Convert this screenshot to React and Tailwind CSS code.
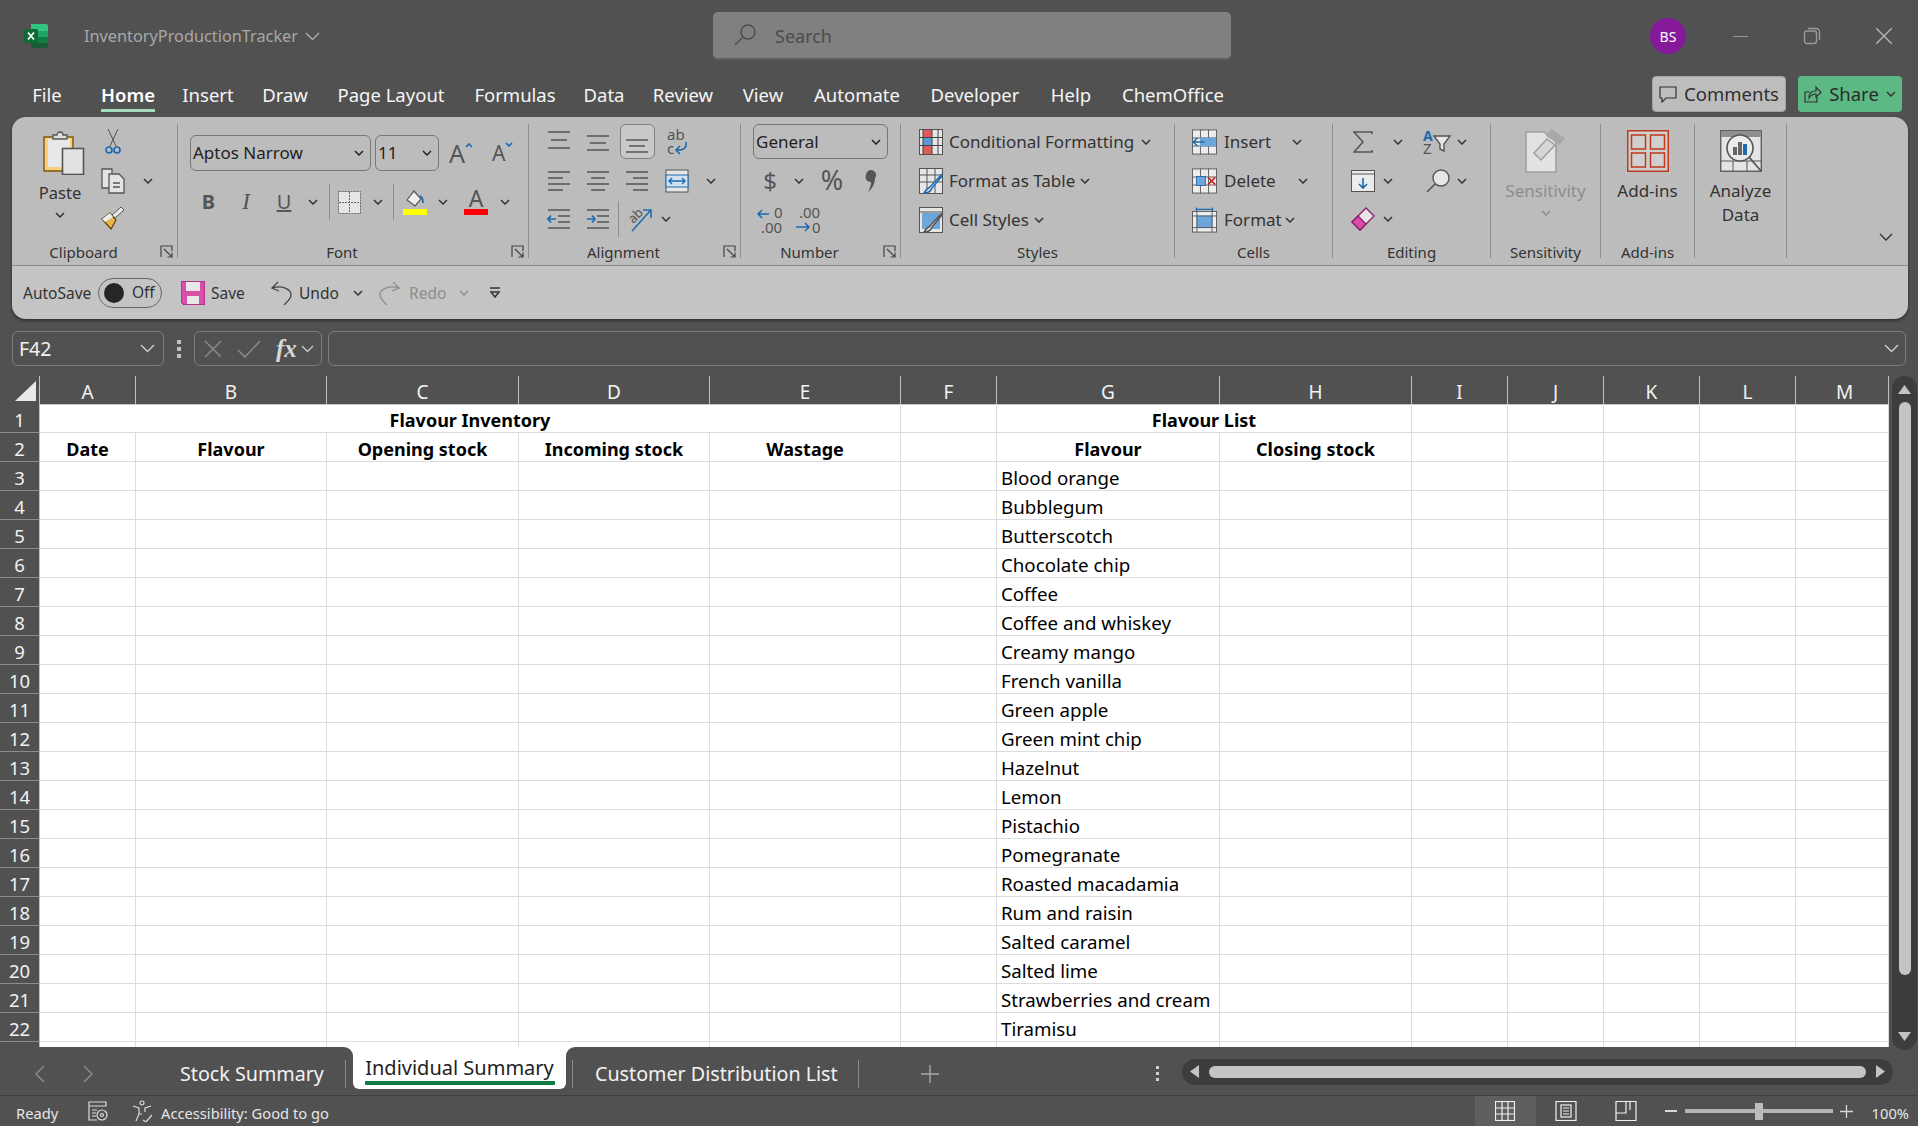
import React from 'react';

const Chev = ({ c = '#333' }) => (
  <svg width="10" height="6" viewBox="0 0 10 6"><path d="M1 1l4 4 4-4" fill="none" stroke={c} strokeWidth="1.5" /></svg>
);
const Launcher = () => (
  <svg width="13" height="13" viewBox="0 0 13 13" fill="none" stroke="#444" strokeWidth="1.2"><path d="M1 12V1h11v5M4 4l8 8M7.5 12H12V7.5" /></svg>
);
const Sep = () => <div className="w-px h-[134px] mt-[2px] bg-[#8e8e8e] shrink-0" />;
const Cell = ({ className = '', children }) => <div className={`flex items-center justify-center shrink-0 ${className}`}>{children}</div>;
const Row = ({ className = '', children }) => <div className={`flex items-center h-[39px] ${className}`}>{children}</div>;

const Group = ({ w, label, launcher, children }) => (
  <div className={`flex flex-col h-[144px] shrink-0 ${w}`}>
    <div className="h-[117px]">{children}</div>
    <div className="h-[25px] flex items-center text-[15px] text-[#333]">
      <div className="flex-1 text-center leading-[22px]">{label}</div>
      {launcher && <div className="w-[22px] flex justify-center"><Launcher /></div>}
    </div>
  </div>
);

const Lines = ({ ys, xs }) => (
  <svg width="24" height="24" viewBox="0 0 24 24" stroke="#555" strokeWidth="1.6">
    {ys.map((y, i) => <line key={i} x1={xs[i][0]} x2={xs[i][1]} y1={y} y2={y} />)}
  </svg>
);
const GridIcon = ({ children }) => (
  <svg width="28" height="28" viewBox="0 0 28 28">
    <rect x="0.5" y="0.5" width="27" height="27" fill="#ececec" stroke="#555" />
    <path d="M0 9.5h28M0 18.5h28M9.5 0v28M18.5 0v28" stroke="#555" />
    {children}
  </svg>
);

const tabs = [['File', 'w-[60px]'], ['Home', 'w-[102px]'], ['Insert', 'w-[58px]'], ['Draw', 'w-[96px]'], ['Page Layout', 'w-[116px]'], ['Formulas', 'w-[132px]'], ['Data', 'w-[46px]'], ['Review', 'w-[112px]'], ['View', 'w-[48px]'], ['Automate', 'w-[140px]'], ['Developer', 'w-[96px]'], ['Help', 'w-[96px]'], ['ChemOffice', 'w-[108px]']];

const colW = [['A', 'w-[96px]'], ['B', 'w-[191px]'], ['C', 'w-[192px]'], ['D', 'w-[191px]'], ['E', 'w-[191px]'], ['F', 'w-[96px]'], ['G', 'w-[223px]'], ['H', 'w-[192px]'], ['I', 'w-[96px]'], ['J', 'w-[96px]'], ['K', 'w-[96px]'], ['L', 'w-[96px]'], ['M', 'w-[93px]']];

const flavours = ['Blood orange', 'Bubblegum', 'Butterscotch', 'Chocolate chip', 'Coffee', 'Coffee and whiskey', 'Creamy mango', 'French vanilla', 'Green apple', 'Green mint chip', 'Hazelnut', 'Lemon', 'Pistachio', 'Pomegranate', 'Roasted macadamia', 'Rum and raisin', 'Salted caramel', 'Salted lime', 'Strawberries and cream', 'Tiramisu', ''];

const gc = 'h-[29px] shrink-0 border-r border-b border-[#dcdcdc] flex items-center overflow-hidden whitespace-nowrap pt-[3px]';

const RowHead = ({ n }) => (
  <div className="w-[40px] h-[29px] pt-[3px] shrink-0 bg-[#515151] border-b border-[#8c8c8c] border-r border-r-[#c0c0c0] text-[#f2f2f2] text-[18.5px] flex items-center justify-center">{n}</div>
);

const SheetRow = ({ n, i }) => {
  const heads = ['Date', 'Flavour', 'Opening stock', 'Incoming stock', 'Wastage', '', 'Flavour', 'Closing stock'];
  return (
    <div className="flex">
      <RowHead n={n} />
      {colW.map(([c, w], k) => (
        <div key={c} className={`${gc} ${w} ${n === 2 ? 'justify-center font-bold' : 'pl-[4px] text-[18.7px]'}`}>
          {n === 2 ? heads[k] : c === 'G' ? flavours[i] : ''}
        </div>
      ))}
    </div>
  );
};

export default function App() {
  return (
    <div className="w-[1918px] h-[1126px] overflow-hidden bg-[#515151] font-['Noto_Sans',sans-serif] text-black">
      {/* Title bar */}
      <div className="h-[72px] flex items-start">
        <div className="w-[713px] h-[72px] flex items-center pl-[24px] shrink-0">
          <svg width="24" height="24" viewBox="0 0 24 24">
            <path d="M7 0h15a2 2 0 0 1 2 2v5H7z" fill="#33c481" />
            <rect x="7" y="7" width="17" height="6" fill="#21a366" />
            <rect x="7" y="13" width="17" height="6" fill="#107c41" />
            <path d="M7 19h17v3a2 2 0 0 1-2 2H9a2 2 0 0 1-2-2z" fill="#185c37" />
            <rect x="0" y="5" width="14" height="14" rx="1.5" fill="#0e6b38" />
            <path d="M4 8.5l6 7M10 8.5l-6 7" stroke="#fff" strokeWidth="1.7" />
          </svg>
          <span className="ml-[36px] text-[16.3px] text-[#a8a8a8] leading-[24px]">InventoryProductionTracker</span>
          <span className="ml-[7px]"><svg width="15" height="9" viewBox="0 0 15 9"><path d="M1 1l6.5 6.5L14 1" fill="none" stroke="#a8a8a8" strokeWidth="1.5" /></svg></span>
        </div>
        <div className="w-[518px] h-[48px] mt-[12px] rounded-[5px] bg-[#808080] border-b-2 border-[#5f5f5f] flex items-center shrink-0">
          <span className="ml-[20px]">
            <svg width="24" height="24" viewBox="0 0 24 24" fill="none" stroke="#4e4e4e" strokeWidth="1.5"><circle cx="15" cy="9" r="7" /><path d="M10 14l-8 8" /></svg>
          </span>
          <span className="ml-[18px] pt-[2px] text-[18px] text-[#4c4c4c]">Search</span>
        </div>
        <div className="ml-[419px] mt-[18px] w-[36px] h-[36px] rounded-full bg-[#86189a] text-white text-[14px] flex items-center justify-center shrink-0">BS</div>
        <div className="ml-[30px] mt-[27px] w-[48px] h-[18px] flex items-center justify-center shrink-0">
          <div className="w-[15px] h-px bg-[#9a9a9a]" />
        </div>
        <div className="ml-[39px] mt-[27px] shrink-0">
          <svg width="18" height="18" viewBox="0 0 18 18" fill="none" stroke="#9a9a9a" strokeWidth="1.4"><rect x="1.5" y="4" width="12" height="12.5" rx="2.5" /><path d="M5 1.5h8a3.5 3.5 0 0 1 3.5 3.5v8" /></svg>
        </div>
        <div className="ml-[55px] mt-[28px] shrink-0">
          <svg width="16" height="16" viewBox="0 0 16 16" fill="none" stroke="#b5b5b5" strokeWidth="1.4"><path d="M0 0l16 16M16 0L0 16" /></svg>
        </div>
      </div>

      {/* Ribbon tabs */}
      <div className="h-[45px] flex pl-[17px] text-[18.5px] text-[#f5f5f5]">
        {tabs.map(([t, w]) => (
          <div key={t} className={`${w} shrink-0 pt-[11px] text-center leading-[24px] whitespace-nowrap flex justify-center`}>
            {t === 'Home'
              ? <span className="inline-block font-semibold text-white h-[29px] border-b-[3px] border-[#a5dcc0]">{t}</span>
              : <span>{t}</span>}
          </div>
        ))}
        <div className="flex-1" />
        <div className="w-[134px] h-[36px] mt-[4px] rounded-[4px] bg-[#bdbdbd] border border-[#a3a3a3] flex items-center justify-center gap-[7px] text-[#2f2f2f] shrink-0">
          <svg width="18" height="17" viewBox="0 0 18 17" fill="none" stroke="#333" strokeWidth="1.2"><path d="M1 1h16v11H7l-4 4v-4H1z" /></svg>
          <span>Comments</span>
        </div>
        <div className="w-[104px] h-[36px] mt-[4px] ml-[12px] mr-[16px] rounded-[4px] bg-[#5cb984] flex items-center justify-center gap-[7px] text-[#2b2b2b] shrink-0">
          <svg width="18" height="18" viewBox="0 0 18 18" fill="none" stroke="#333" strokeWidth="1.2"><path d="M1 7h5M1 7v10h12v-5M5 13c0-5 3-7 7-7V2l5 5.5L12 12V9c-3 0-5 1-7 4z" /></svg>
          <span>Share</span>
          <Chev />
        </div>
      </div>

      {/* Ribbon */}
      <div className="ml-[12px] w-[1896px] h-[202px] rounded-[14px] overflow-hidden shadow-[0_2px_3px_rgba(0,0,0,0.4)]">
        <div className="h-[149px] bg-[#bcbcbc] border-b border-[#8a8a8a] flex pt-[5px] text-[#333] text-[17px]">
          <Group w="w-[165px]" label="Clipboard" launcher>
            <div className="flex">
              <div className="ml-[18px] w-[60px] flex flex-col items-center">
                <svg className="mt-[8px] ml-[8px]" width="42" height="45" viewBox="0 0 42 45">
                  <path d="M1 7h29v34H1z" fill="#f8d078" stroke="#7a5510" strokeWidth="1.4" />
                  <path d="M5 9h22v28H5z" fill="#e8e8e8" />
                  <path d="M10 9V5h4a3 3 0 0 1 6 0h4v4z" fill="#ddd" stroke="#555" strokeWidth="1.3" />
                  <rect x="19.5" y="18.5" width="21" height="26" fill="#e2e2e2" stroke="#555" strokeWidth="1.6" />
                </svg>
                <span className="mt-[6px] leading-[24px] text-[16.5px]">Paste</span>
                <span className="mt-[7px]"><Chev /></span>
              </div>
              <div className="w-[70px]">
                <Row>
                  <Cell className="w-[46px]">
                    <svg width="16" height="26" viewBox="0 0 16 26" fill="none"><path d="M3 0l8 17M13 0L5 17" stroke="#555" /><circle cx="4" cy="21" r="3" stroke="#1d69b0" strokeWidth="1.7" /><circle cx="12" cy="21" r="3" stroke="#1d69b0" strokeWidth="1.7" /></svg>
                  </Cell>
                </Row>
                <Row>
                  <Cell className="w-[46px]">
                    <svg width="24" height="26" viewBox="0 0 24 26" fill="none" stroke="#555" strokeWidth="1.3"><path d="M9 20H1V1h10v4" fill="#e4e4e4" /><path d="M8 6h10l5 5v14H8z" fill="#e4e4e4" /><path d="M12 15h7M12 19h7" /></svg>
                  </Cell>
                  <Cell className="w-[24px]"><Chev /></Cell>
                </Row>
                <Row className="-mt-[2px]">
                  <Cell className="w-[46px]">
                    <svg width="24" height="24" viewBox="0 0 24 24"><path d="M1 13l8-6 6 7-5 9z" fill="#e8b64c" stroke="#5a4210" strokeWidth="1.2" /><path d="M1 13l8-6 3 4-8 5z" fill="#eee" /><path d="M11 9l9-8 3 3-9 8z" fill="#e6e6e6" stroke="#555" /></svg>
                  </Cell>
                </Row>
              </div>
            </div>
          </Group>
          <Sep />
          <Group w="w-[350px]" label="Font" launcher>
            <div className="h-[62px] flex items-center pl-[12px]">
              <div className="w-[181px] h-[36px] rounded-[6px] border border-[#777] flex items-center pl-[2px] pr-[6px] justify-between text-[17px] text-[#222]"><span>Aptos Narrow</span><Chev c="#222" /></div>
              <div className="ml-[4px] w-[64px] h-[36px] rounded-[6px] border border-[#777] flex items-center pl-[2px] pr-[6px] justify-between text-[17px] text-[#222]"><span>11</span><Chev c="#222" /></div>
              <div className="ml-[10px] w-[24px] flex items-start text-[25px] leading-[30px] text-[#555]"><span>A</span><svg className="mt-[4px] shrink-0" width="8" height="6" viewBox="0 0 8 6"><path d="M1 5l3-3 3 3" fill="none" stroke="#1d69b0" strokeWidth="1.6" /></svg></div>
              <div className="ml-[19px] w-[22px] flex items-start text-[21px] leading-[30px] text-[#555]"><span>A</span><svg className="mt-[4px] shrink-0" width="8" height="6" viewBox="0 0 8 6"><path d="M1 1l3 3 3-3" fill="none" stroke="#1d69b0" strokeWidth="1.6" /></svg></div>
            </div>
            <div className="h-[36px] flex items-center pl-[12px] text-[#555]">
              <Cell className="w-[37px] font-bold text-[20px]">B</Cell>
              <Cell className="w-[38px] italic text-[23px] font-['Liberation_Serif',serif]">I</Cell>
              <Cell className="w-[38px]"><span className="text-[20px] underline leading-[24px]">U</span></Cell>
              <Cell className="w-[20px]"><Chev /></Cell>
              <div className="ml-[6px] w-px h-[36px] bg-[#8e8e8e]" />
              <Cell className="w-[38px]">
                <svg width="23" height="23" viewBox="0 0 23 23"><rect x="0.5" y="0.5" width="22" height="22" fill="#e6e6e6" stroke="#666" strokeDasharray="2 1" /><path d="M11.5 1v21M1 11.5h21" stroke="#666" strokeDasharray="2 1" /></svg>
              </Cell>
              <Cell className="w-[20px]"><Chev /></Cell>
              <div className="ml-[5px] w-px h-[36px] bg-[#8e8e8e]" />
              <Cell className="w-[42px]">
                <svg width="24" height="25" viewBox="0 0 24 25"><path d="M4 10L11 1l7 8-6 7z" fill="#eee" stroke="#555" strokeWidth="1.2" /><path d="M17 6c3 1 3 5 3 7" stroke="#1d69b0" strokeWidth="1.8" fill="none" /><rect x="0" y="19" width="24" height="6" fill="#ffff00" /></svg>
              </Cell>
              <Cell className="w-[14px]"><Chev /></Cell>
              <Cell className="ml-[4px] w-[44px]">
                <div className="flex flex-col items-center w-[24px]">
                  <span className="text-[23px] leading-[19px] text-[#555]">A</span>
                  <div className="w-[24px] h-[6px] mt-[1px] bg-[#ff0000]" />
                </div>
              </Cell>
              <Cell className="w-[13px]"><Chev /></Cell>
            </div>
          </Group>
          <Sep />
          <Group w="w-[211px]" label="Alignment" launcher>
            <Row className="pl-[11px]">
              <Cell className="w-[38px]"><Lines ys={[2, 10, 18]} xs={[[1, 23], [4, 20], [1, 23]]} /></Cell>
              <Cell className="w-[40px]"><Lines ys={[6, 13, 20]} xs={[[1, 23], [4, 20], [1, 23]]} /></Cell>
              <Cell className="w-[38px]"><div className="w-[35px] h-[35px] rounded-[6px] border border-[#808080] bg-[#c9c9c9] flex items-center justify-center"><Lines ys={[10, 16, 22]} xs={[[1, 23], [4, 20], [1, 23]]} /></div></Cell>
              <Cell className="w-[42px]">
                <svg className="overflow-visible" width="24" height="28" viewBox="0 0 24 28"><text x="2" y="12" fontSize="15" fill="#555" fontFamily="Noto Sans">ab</text><text x="2" y="26" fontSize="15" fill="#555" fontFamily="Noto Sans">c</text><path d="M21 14c1 7-3 8-9 8M15 18l-4 4 4 4" fill="none" stroke="#1d69b0" strokeWidth="1.6" /></svg>
              </Cell>
            </Row>
            <Row className="pl-[11px]">
              <Cell className="w-[38px]"><Lines ys={[3, 9, 15, 21]} xs={[[1, 23], [1, 16], [1, 23], [1, 16]]} /></Cell>
              <Cell className="w-[40px]"><Lines ys={[3, 9, 15, 21]} xs={[[1, 23], [5, 19], [1, 23], [5, 19]]} /></Cell>
              <Cell className="w-[38px]"><Lines ys={[3, 9, 15, 21]} xs={[[1, 23], [8, 23], [1, 23], [8, 23]]} /></Cell>
              <Cell className="w-[42px]">
                <svg width="24" height="24" viewBox="0 0 24 24" fill="none"><rect x="1" y="1" width="22" height="22" fill="#e6e6e6" stroke="#555" /><rect x="1" y="6" width="22" height="12" fill="#cfe0ef" stroke="#1d69b0" /><path d="M4 12h16M7 9l-3 3 3 3M17 9l3 3-3 3" stroke="#1d69b0" strokeWidth="1.4" /></svg>
              </Cell>
              <Cell className="w-[26px]"><Chev /></Cell>
            </Row>
            <Row className="pl-[11px] -mt-px">
              <Cell className="w-[38px]">
                <svg width="24" height="24" viewBox="0 0 24 24" fill="none"><path d="M1 3h22M11 9h12M11 15h12M1 21h22" stroke="#555" strokeWidth="1.6" /><path d="M9 12H1M4 8.5L1 12l3 3.5" stroke="#1d69b0" strokeWidth="1.7" /></svg>
              </Cell>
              <Cell className="w-[40px]">
                <svg width="24" height="24" viewBox="0 0 24 24" fill="none"><path d="M1 3h22M11 9h12M11 15h12M1 21h22" stroke="#555" strokeWidth="1.6" /><path d="M1 12h8M6 8.5L9 12l-3 3.5" stroke="#1d69b0" strokeWidth="1.7" /></svg>
              </Cell>
              <div className="w-px h-[36px] bg-[#8e8e8e] mr-[2px]" />
              <Cell className="w-[40px]">
                <svg className="overflow-visible" width="26" height="26" viewBox="0 0 26 26" fill="none"><text x="1" y="14" fontSize="13" fill="#555" fontFamily="Noto Sans" transform="rotate(-45 8 11)">ab</text><path d="M4 25L22 5M15 4h8v8" stroke="#1d69b0" strokeWidth="1.5" /></svg>
              </Cell>
              <Cell className="w-[10px]"><Chev /></Cell>
            </Row>
          </Group>
          <Sep />
          <Group w="w-[159px]" label="Number" launcher>
            <Row className="pl-[12px]">
              <div className="w-[135px] h-[35px] rounded-[6px] border border-[#777] flex items-center pl-[2px] pr-[6px] justify-between text-[17px] text-[#222]"><span>General</span><Chev c="#222" /></div>
            </Row>
            <Row className="pl-[14px] text-[#555]">
              <Cell className="w-[30px] text-[24px]">$</Cell>
              <Cell className="w-[28px]"><Chev /></Cell>
              <Cell className="w-[38px] text-[27px]">%</Cell>
              <Cell className="w-[40px]">
                <svg width="12" height="24" viewBox="0 0 12 24"><path d="M1 6a5 5 0 1 1 9 3c0 6-3 11-7 14 2-4 3-7 3-10a5 5 0 0 1-5-7z" fill="#555" /></svg>
              </Cell>
            </Row>
            <Row className="pl-[11px]">
              <Cell className="w-[38px]">
                <svg className="overflow-visible" width="30" height="28" viewBox="0 0 30 28" fill="none"><text x="18" y="12" fontSize="15" fill="#555" fontFamily="Noto Sans">0</text><text x="5" y="27" fontSize="15" fill="#555" fontFamily="Noto Sans">.00</text><path d="M13 8H2M6 4L2 8l4 4" stroke="#1d69b0" strokeWidth="1.5" /></svg>
              </Cell>
              <Cell className="w-[38px]">
                <svg className="overflow-visible" width="30" height="28" viewBox="0 0 30 28" fill="none"><text x="5" y="12" fontSize="15" fill="#555" fontFamily="Noto Sans">.00</text><text x="18" y="27" fontSize="15" fill="#555" fontFamily="Noto Sans">0</text><path d="M2 21h13M11 17l4 4-4 4" stroke="#1d69b0" strokeWidth="1.5" /></svg>
              </Cell>
            </Row>
          </Group>
          <Sep />
          <Group w="w-[273px]" label="Styles">
            <Row className="pl-[18px]">
              <svg width="24" height="26" viewBox="0 0 24 26"><rect x="0.5" y="0.5" width="23" height="25" fill="#e6e6e6" stroke="#555" /><rect x="4" y="1" width="9" height="7" fill="#e05a5a" /><rect x="4" y="9" width="9" height="7" fill="#5b9bd5" /><rect x="4" y="17" width="9" height="8" fill="#e05a5a" /><path d="M0 8.5h24M0 16.5h24M4 0v26M13 0v26M19 0v26" stroke="#444" /></svg>
              <span className="ml-[6px] text-[#333] whitespace-nowrap">Conditional Formatting</span>
              <span className="ml-[7px]"><Chev /></span>
            </Row>
            <Row className="pl-[18px]">
              <svg width="24" height="26" viewBox="0 0 24 26" fill="none"><rect x="0.5" y="0.5" width="23" height="25" fill="#e6e6e6" stroke="#555" /><path d="M0 7h24M0 14h24M8 0v26M16 0v26" stroke="#555" /><path d="M23 6l-12 13c-2 1-4 3-6 6 4 0 7-2 8-5L23 8" fill="#e6e6e6" stroke="#1d69b0" strokeWidth="1.5" /></svg>
              <span className="ml-[6px] text-[#333] whitespace-nowrap">Format as Table</span>
              <span className="ml-[5px]"><Chev /></span>
            </Row>
            <Row className="pl-[18px]">
              <svg width="24" height="26" viewBox="0 0 24 26" fill="none"><rect x="0.5" y="0.5" width="23" height="25" fill="#e6e6e6" stroke="#555" /><rect x="3" y="6" width="18" height="16" fill="#6ea6da" /><path d="M0 5h24" stroke="#555" /><path d="M23 6l-12 13c-2 1-4 3-6 6 4 0 7-2 8-5L23 8" fill="#e6e6e6" stroke="#555" strokeWidth="1.5" /></svg>
              <span className="ml-[6px] text-[#333] whitespace-nowrap">Cell Styles</span>
              <span className="ml-[5px]"><Chev /></span>
            </Row>
          </Group>
          <Sep />
          <Group w="w-[157px]" label="Cells">
            <Row className="pl-[17px]">
              <Cell className="w-[25px]"><GridIcon><rect x="9" y="9" width="18" height="10" fill="#6ea6da" /><path d="M14 14H2M6 9.5L1.5 14 6 18.5" fill="none" stroke="#1d69b0" strokeWidth="1.6" /></GridIcon></Cell>
              <span className="ml-[7px] w-[66px]">Insert</span>
              <Cell className="w-[14px]"><Chev /></Cell>
            </Row>
            <Row className="pl-[17px]">
              <Cell className="w-[25px]"><GridIcon><rect x="5" y="9" width="10" height="10" fill="#6ea6da" stroke="#1d69b0" /><path d="M18 10l8 8M26 10l-8 8" stroke="#c62828" strokeWidth="1.8" /></GridIcon></Cell>
              <span className="ml-[7px] w-[72px]">Delete</span>
              <Cell className="w-[14px]"><Chev /></Cell>
            </Row>
            <Row className="pl-[17px]">
              <Cell className="w-[25px]">
                <svg width="28" height="28" viewBox="0 0 28 28"><rect x="0.5" y="4.5" width="27" height="23" fill="#ececec" stroke="#555" /><rect x="5" y="9" width="18" height="14" fill="#6ea6da" /><path d="M0 9.5h28M0 22.5h28M5.5 4v24M22.5 4v24" stroke="#555" /><path d="M5 2h18M5 0v4M23 0v4" stroke="#1d69b0" strokeWidth="1.4" /></svg>
              </Cell>
              <span className="ml-[7px] w-[59px]">Format</span>
              <Cell className="w-[14px]"><Chev /></Cell>
            </Row>
          </Group>
          <Sep />
          <Group w="w-[157px]" label="Editing">
            <Row className="pl-[17px]">
              <Cell className="w-[26px]"><svg width="20" height="22" viewBox="0 0 20 22" fill="none" stroke="#555" strokeWidth="1.6"><path d="M19 3V1H1l9 10-9 10h18v-2" /></svg></Cell>
              <Cell className="ml-[15px] w-[14px]"><Chev /></Cell>
              <Cell className="ml-[19px] w-[26px]">
                <svg className="overflow-visible" width="28" height="26" viewBox="0 0 28 26" fill="none"><text x="0" y="12" fontSize="14" fontWeight="700" fill="#1d69b0" fontFamily="Noto Sans">A</text><text x="0" y="25" fontSize="15" fill="#555" fontFamily="Noto Sans">Z</text><path d="M11 7h16l-6 8v7l-4-2v-5z" fill="#e6e6e6" stroke="#555" strokeWidth="1.4" /></svg>
              </Cell>
              <Cell className="ml-[5px] w-[14px]"><Chev /></Cell>
            </Row>
            <Row className="pl-[17px]">
              <Cell className="w-[26px]"><svg width="24" height="22" viewBox="0 0 24 22"><rect x="0.5" y="0.5" width="23" height="21" fill="#ececec" stroke="#555" /><path d="M0 4h24" stroke="#555" /><path d="M12 8v10M8 14l4 4 4-4" fill="none" stroke="#1d69b0" strokeWidth="1.6" /></svg></Cell>
              <Cell className="ml-[5px] w-[14px]"><Chev /></Cell>
              <Cell className="ml-[30px] w-[26px]"><svg width="24" height="24" viewBox="0 0 24 24" fill="none"><circle cx="15" cy="9" r="8" fill="#e6e6e6" stroke="#555" strokeWidth="1.4" /><path d="M9 15l-8 8" stroke="#555" strokeWidth="1.6" /></svg></Cell>
              <Cell className="ml-[4px] w-[14px]"><Chev /></Cell>
            </Row>
            <Row className="pl-[17px] -mt-px">
              <Cell className="w-[26px]"><svg width="24" height="24" viewBox="0 0 24 24"><path d="M1 15L15 1l8 8L9 23z" fill="#e6e6e6" stroke="#8c1b6e" strokeWidth="1.3" /><path d="M1 15l6-6 8 8-6 6z" fill="#d94fa8" stroke="#8c1b6e" strokeWidth="1.3" /></svg></Cell>
              <Cell className="ml-[5px] w-[14px]"><Chev /></Cell>
            </Row>
          </Group>
          <Sep />
          <Group w="w-[109px]" label="Sensitivity">
            <div className="flex flex-col items-center text-[#8d8d8d]">
              <svg className="mt-[5px]" width="42" height="46" viewBox="0 0 42 46" fill="none">
                <path d="M1 5h18l12 10v30H1z" fill="#e2e2e2" stroke="#a0a0a0" strokeWidth="1.6" />
                <path d="M26 2l14 9-5 7-14-9z" fill="#a8a8a8" />
                <path d="M9 26L22 12l8 6-14 15z" fill="#d6d6d6" stroke="#a0a0a0" strokeWidth="1.5" />
              </svg>
              <span className="mt-[6px] leading-[24px]">Sensitivity</span>
              <span className="mt-[7px]"><Chev c="#8d8d8d" /></span>
            </div>
          </Group>
          <Sep />
          <Group w="w-[93px]" label="Add-ins">
            <div className="flex flex-col items-center">
              <svg className="mt-[8px]" width="42" height="42" viewBox="0 0 42 42" fill="none" stroke="#c0391b" strokeWidth="1.5">
                <rect x="0.75" y="0.75" width="40.5" height="40.5" fill="#cfcfcf" />
                <rect x="4.5" y="5" width="14" height="14" /><rect x="23.5" y="5" width="14" height="14" /><rect x="4.5" y="23" width="14" height="14" /><rect x="23.5" y="23" width="14" height="14" />
              </svg>
              <span className="mt-[7px] leading-[24px]">Add-ins</span>
            </div>
          </Group>
          <Sep />
          <Group w="w-[91px]" label="">
            <div className="flex flex-col items-center">
              <svg className="mt-[8px]" width="42" height="42" viewBox="0 0 42 42" fill="none">
                <rect x="0.75" y="0.75" width="40.5" height="40.5" fill="#e4e4e4" stroke="#555" strokeWidth="1.3" />
                <rect x="1" y="1" width="40" height="6" fill="#8f8f8f" />
                <path d="M1 31h40M13 31v10M27 31v10" stroke="#555" />
                <circle cx="20" cy="18" r="13" fill="#ececec" stroke="#555" strokeWidth="1.6" />
                <path d="M29 27l12 14" stroke="#555" strokeWidth="1.8" />
                <rect x="13" y="17" width="4" height="8" fill="#666" /><rect x="18" y="12" width="4" height="13" fill="#666" /><rect x="23" y="14" width="4" height="11" fill="#1d69b0" />
              </svg>
              <span className="mt-[7px] leading-[24px]">Analyze</span>
              <span className="leading-[24px]">Data</span>
            </div>
          </Group>
          <Sep />
          <div className="flex-1 flex items-end justify-end pr-[15px] pb-[15px] h-[134px]">
            <svg width="14" height="8" viewBox="0 0 14 8"><path d="M1 1l6 6 6-6" fill="none" stroke="#333" strokeWidth="1.4" /></svg>
          </div>
        </div>
        {/* Quick access */}
        <div className="h-[53px] bg-[#c4c4c4] flex items-center text-[15.5px] text-[#333] pl-[11px]">
          <span className="w-[75px] shrink-0 whitespace-nowrap pt-[2px]">AutoSave</span>
          <div className="w-[64px] h-[30px] rounded-full border border-[#666] flex items-center pl-[5px] shrink-0">
            <div className="w-[20px] h-[20px] rounded-full bg-[#262626]" />
            <span className="ml-[8px]">Off</span>
          </div>
          <svg className="ml-[19px] shrink-0" width="24" height="24" viewBox="0 0 24 24"><path d="M0 0h24v24H3l-3-3z" fill="#d94fa8" stroke="#8c1b6e" /><rect x="5" y="1" width="14" height="9" fill="#e8e8e8" /><rect x="6" y="15" width="12" height="8" fill="#e8e8e8" /></svg>
          <span className="ml-[6px] w-[46px] shrink-0 pt-[2px]">Save</span>
          <svg className="ml-[13px] shrink-0" width="22" height="24" viewBox="0 0 22 24" fill="none" stroke="#444" strokeWidth="1.3"><path d="M8 1L2 7l7 3M2 7c10-3 19 1 19 7 0 4-4 7-7 10" /></svg>
          <span className="ml-[7px] w-[49px] shrink-0 pt-[2px]">Undo</span>
          <span className="ml-[5px] shrink-0"><Chev /></span>
          <svg className="ml-[16px] shrink-0" width="22" height="24" viewBox="0 0 22 24" fill="none" stroke="#8d8d8d" strokeWidth="1.3"><path d="M14 1l6 6-7 3M20 7C10 4 1 8 1 14c0 4 4 7 7 10" /></svg>
          <span className="ml-[8px] w-[44px] shrink-0 text-[#8d8d8d] pt-[2px]">Redo</span>
          <span className="ml-[6px] shrink-0"><Chev c="#8d8d8d" /></span>
          <svg className="ml-[20px] shrink-0" width="12" height="12" viewBox="0 0 12 12" fill="none" stroke="#333" strokeWidth="1.5"><path d="M1 1h10M2 5l4 5 4-5z" /></svg>
        </div>
      </div>

      {/* Formula bar */}
      <div className="h-[35px] mt-[12px] flex items-stretch text-[#f2f2f2]">
        <div className="ml-[12px] w-[152px] rounded-[6px] border border-[#7d7d7d] flex items-center justify-between pl-[6px] pr-[8px] text-[19.5px]">
          <span>F42</span>
          <svg width="15" height="9" viewBox="0 0 15 9"><path d="M1 1l6.5 6.5L14 1" fill="none" stroke="#c8c8c8" strokeWidth="1.5" /></svg>
        </div>
        <div className="w-[30px] flex flex-col items-center justify-center gap-[3px]">
          <div className="w-[4px] h-[4px] bg-[#c0c0c0]" /><div className="w-[4px] h-[4px] bg-[#c0c0c0]" /><div className="w-[4px] h-[4px] bg-[#c0c0c0]" />
        </div>
        <div className="w-[128px] rounded-[6px] border border-[#7d7d7d] flex items-center pl-[9px]">
          <svg width="18" height="18" viewBox="0 0 18 18" fill="none" stroke="#8a8a8a" strokeWidth="1.5"><path d="M1 1l16 16M17 1L1 17" /></svg>
          <svg className="ml-[15px]" width="24" height="18" viewBox="0 0 24 18" fill="none" stroke="#8a8a8a" strokeWidth="1.5"><path d="M1 10l7 7L23 1" /></svg>
          <span className="ml-[15px] font-['Liberation_Serif',serif] italic font-bold text-[25px] text-[#d8d8d8] leading-[30px]">fx</span>
          <svg className="ml-[4px]" width="13" height="8" viewBox="0 0 13 8"><path d="M1 1l5.5 5.5L12 1" fill="none" stroke="#c8c8c8" strokeWidth="1.4" /></svg>
        </div>
        <div className="ml-[6px] w-[1578px] rounded-[6px] border border-[#7d7d7d] flex items-center justify-end pr-[6px]">
          <svg width="15" height="9" viewBox="0 0 15 9"><path d="M1 1l6.5 6.5L14 1" fill="none" stroke="#c8c8c8" strokeWidth="1.5" /></svg>
        </div>
      </div>

      {/* Sheet */}
      <div className="mt-[10px] h-[671px] flex items-start">
        <div className="w-[1889px] shrink-0">
          <div className="flex h-[28px] text-[19px] text-[#f2f2f2]">
            <div className="w-[40px] shrink-0 flex items-end justify-end pr-[3px] pb-[3px] border-r border-[#c0c0c0]">
              <svg width="21" height="20" viewBox="0 0 21 20"><path d="M21 0v20H0z" fill="#e8e8e8" /></svg>
            </div>
            {colW.map(([c, w]) => (
              <div key={c} className={`${w} shrink-0 border-r border-[#c0c0c0] flex items-center justify-center pt-[4px] ${c === 'M' ? 'pl-[5px]' : ''}`}>{c}</div>
            ))}
          </div>
          <div className="h-[643px] overflow-hidden bg-white text-[18px] leading-[24px] shadow-[inset_0_1px_0_#c8c8c8]">
            <div className="flex">
              <RowHead n={1} />
              <div className={`${gc} w-[861px] justify-center font-bold`}>Flavour Inventory</div>
              <div className={`${gc} w-[96px]`} />
              <div className={`${gc} w-[415px] justify-center font-bold`}>Flavour List</div>
              {colW.slice(8).map(([c, w]) => <div key={c} className={`${gc} ${w}`} />)}
            </div>
            {Array.from({ length: 22 }, (_, i) => <SheetRow key={i} n={i + 2} i={i - 1} />)}
          </div>
        </div>
        <div className="relative z-10 ml-[3px] w-[25px] h-[674px] rounded-full bg-[#3d3d3d] flex flex-col items-center pt-[9px] shrink-0">
          <svg width="13" height="9" viewBox="0 0 13 9"><path d="M6.5 0L13 9H0z" fill="#c4c4c4" /></svg>
          <div className="mt-[8px] w-[12px] h-[573px] rounded-full bg-[#c4c4c4]" />
          <div className="flex-1" />
          <svg className="mb-[9px]" width="13" height="9" viewBox="0 0 13 9"><path d="M6.5 9L13 0H0z" fill="#c4c4c4" /></svg>
        </div>
      </div>

      {/* Sheet tabs */}
      <div className="h-[48px] flex bg-white text-[19.7px] text-[#f2f2f2]">
        <div className="w-[353px] shrink-0 bg-[#515151] rounded-tr-[9px] flex items-center pl-[35px] pt-[5px]">
          <svg width="10" height="18" viewBox="0 0 10 18" fill="none" stroke="#8f8f8f" strokeWidth="1.3"><path d="M9 1L1 9l8 8" /></svg>
          <svg className="ml-[38px]" width="10" height="18" viewBox="0 0 10 18" fill="none" stroke="#8f8f8f" strokeWidth="1.3"><path d="M1 1l8 8-8 8" /></svg>
          <span className="ml-[87px] w-[143px] text-center whitespace-nowrap">Stock Summary</span>
          <div className="ml-[22px] w-px h-[28px] bg-[#8a8a8a]" />
        </div>
        <div className="w-[213px] shrink-0 bg-[#515151]">
          <div className="h-[42px] bg-white rounded-b-[6px] flex flex-col items-center">
            <span className="mt-[9px] leading-[24px] text-[#222] text-[20px] whitespace-nowrap">Individual Summary</span>
            <div className="mt-[1px] w-[190px] h-[4px] bg-[#107c41]" />
          </div>
        </div>
        <div className="flex-1 bg-[#515151] rounded-tl-[9px] flex items-center pt-[5px]">
          <div className="ml-[6px] w-px h-[28px] bg-[#8a8a8a]" />
          <span className="ml-[22px] w-[241px] text-center whitespace-nowrap">Customer Distribution List</span>
          <div className="ml-[22px] w-px h-[28px] bg-[#8a8a8a]" />
          <svg className="ml-[62px]" width="18" height="18" viewBox="0 0 18 18" stroke="#a8a8a8" strokeWidth="1.4"><path d="M9 0v18M0 9h18" /></svg>
          <div className="ml-[217px] flex flex-col gap-[3px]">
            <div className="w-[3px] h-[3px] bg-[#d0d0d0]" /><div className="w-[3px] h-[3px] bg-[#d0d0d0]" /><div className="w-[3px] h-[3px] bg-[#d0d0d0]" />
          </div>
          <div className="ml-[23px] w-[711px] h-[26px] rounded-full bg-[#3d3d3d] flex items-center pl-[8px] pr-[8px] justify-between -mt-[4px]">
            <svg width="9" height="13" viewBox="0 0 9 13"><path d="M0 6.5L9 0v13z" fill="#c4c4c4" /></svg>
            <div className="w-[657px] h-[12px] rounded-full bg-[#c4c4c4]" />
            <svg width="9" height="13" viewBox="0 0 9 13"><path d="M9 6.5L0 0v13z" fill="#c4c4c4" /></svg>
          </div>
        </div>
      </div>

      {/* Status bar */}
      <div className="h-[31px] border-t border-[#3f3f3f] flex items-center text-[14.7px] text-[#e6e6e6]">
        <span className="ml-[16px] w-[45px] pt-[4px]">Ready</span>
        <svg className="ml-[27px]" width="20" height="20" viewBox="0 0 20 20" fill="none" stroke="#dcdcdc" strokeWidth="1.2"><path d="M1 1h17v4H1zM1 5v14h8M4 9h5M4 12h4M4 15h4" /><circle cx="14" cy="14" r="5" /><circle cx="14" cy="14" r="1.5" /></svg>
        <svg className="ml-[24px]" width="22" height="22" viewBox="0 0 22 22" fill="none" stroke="#dcdcdc" strokeWidth="1.2"><circle cx="10" cy="3" r="2" /><path d="M1 6l6 2v6l-3 7M19 6l-6 2v4M7 14h3M11 20l3 2 6-7" /></svg>
        <span className="ml-[7px] pt-[4px] whitespace-nowrap">Accessibility: Good to go</span>
        <div className="flex-1" />
        <div className="w-[61px] h-[30px] bg-[#5f5f5f] flex items-center justify-center">
          <svg width="20" height="20" viewBox="0 0 20 20" fill="none" stroke="#f0f0f0" strokeWidth="1.2"><rect x="0.5" y="0.5" width="19" height="19" /><path d="M7 0v20M13 0v20M0 7h20M0 13h20" /></svg>
        </div>
        <div className="w-[60px] flex items-center justify-center">
          <svg width="22" height="20" viewBox="0 0 22 20" fill="none" stroke="#f0f0f0" strokeWidth="1.2"><rect x="1" y="0.5" width="20" height="19" /><rect x="6" y="4" width="10" height="12" /><path d="M8 7h6M8 10h6M8 13h6" /></svg>
        </div>
        <div className="w-[60px] flex items-center justify-center">
          <svg width="22" height="20" viewBox="0 0 22 20" fill="none" stroke="#f0f0f0" strokeWidth="1.2"><path d="M1 0.5h20v19H1zM1 12h10V0.5M15 0.5V9" /></svg>
        </div>
        <div className="ml-[9px] w-[12px] h-[1.5px] bg-[#d8d8d8]" />
        <div className="ml-[8px] w-[148px] h-[4px] bg-[#b4b4b4] flex items-center">
          <div className="ml-[70px] w-[8px] h-[17px] bg-[#bcbcbc]" />
        </div>
        <svg className="ml-[7px]" width="13" height="13" viewBox="0 0 13 13" stroke="#d8d8d8" strokeWidth="1.3"><path d="M6.5 0v13M0 6.5h13" /></svg>
        <span className="ml-[19px] mr-[9px] pt-[4px] whitespace-nowrap">100%</span>
      </div>
    </div>
  );
}
